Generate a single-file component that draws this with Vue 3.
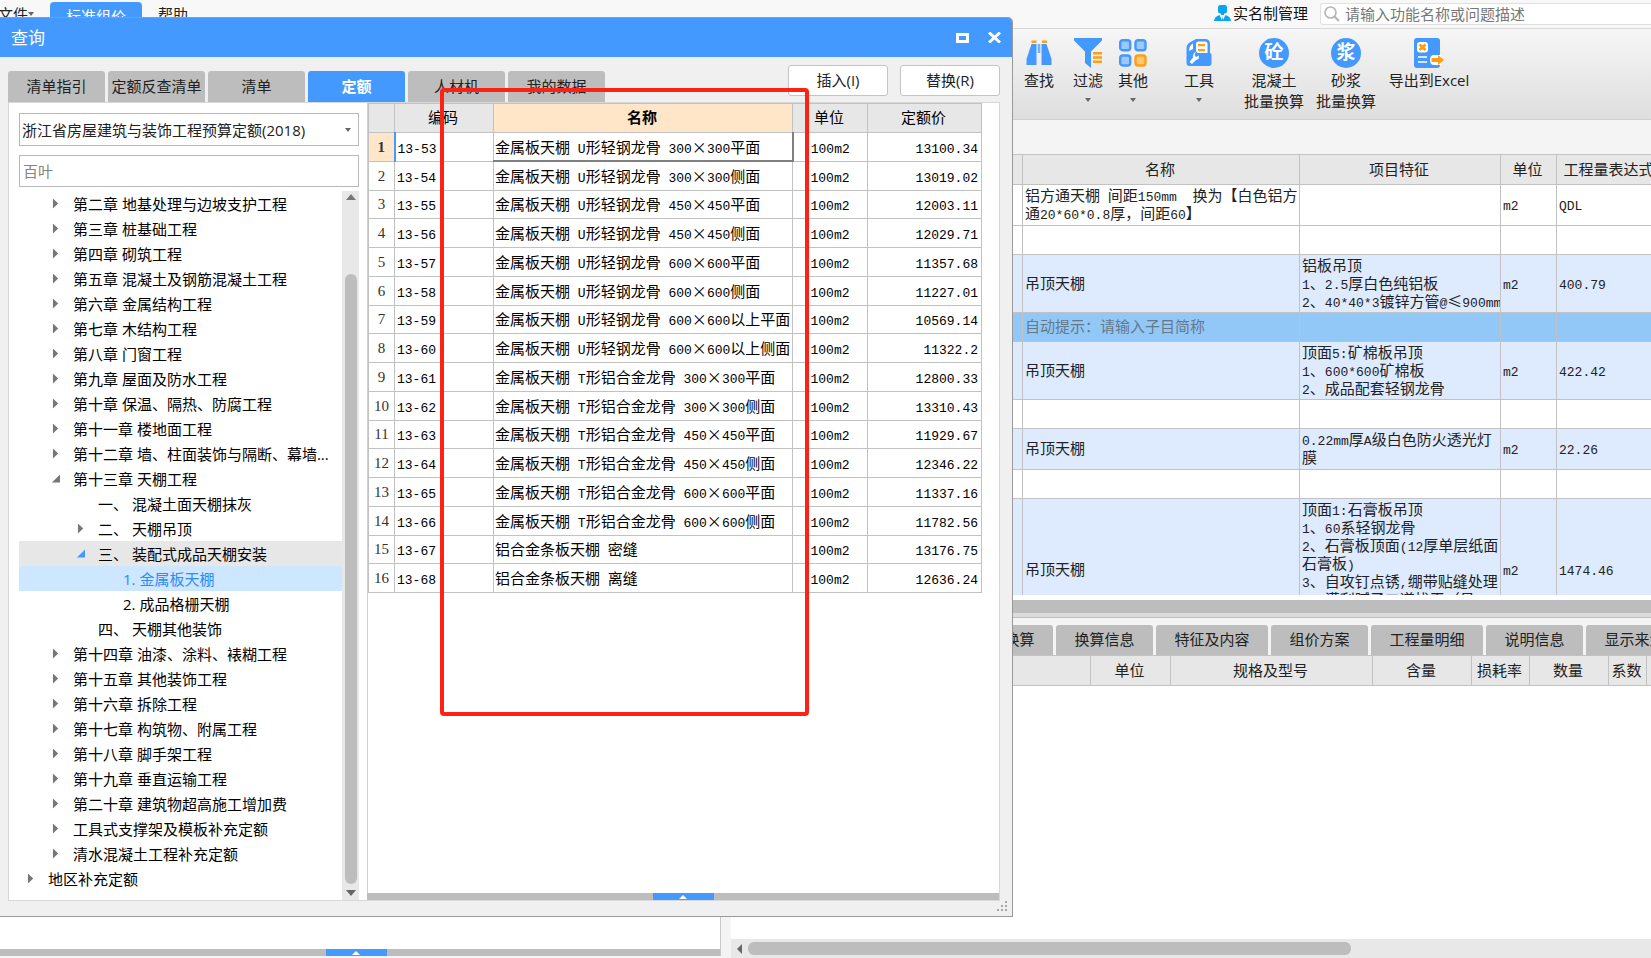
<script setup>
import { h, ref } from 'vue'

// Renders mixed text with half-width characters set in the monospace face.
const Mixed = (props) =>
  (props.text.match(/[\x20-\x7e]+|[^\x20-\x7e]+/g) || []).map((run) =>
    h('span', { class: /^[\x20-\x7e]/.test(run) ? 'run-half' : 'run-full' }, run)
  )
Mixed.props = ['text']

const tabs = ['清单指引', '定额反查清单', '清单', '定额', '人材机', '我的数据']
const activeTab = ref('定额')
const keyword = ref('百叶')

const tree = [
  ['第二章 地基处理与边坡支护工程', 1, 'closed'],
  ['第三章 桩基础工程', 1, 'closed'],
  ['第四章 砌筑工程', 1, 'closed'],
  ['第五章 混凝土及钢筋混凝土工程', 1, 'closed'],
  ['第六章 金属结构工程', 1, 'closed'],
  ['第七章 木结构工程', 1, 'closed'],
  ['第八章 门窗工程', 1, 'closed'],
  ['第九章 屋面及防水工程', 1, 'closed'],
  ['第十章 保温、隔热、防腐工程', 1, 'closed'],
  ['第十一章 楼地面工程', 1, 'closed'],
  ['第十二章 墙、柱面装饰与隔断、幕墙...', 1, 'closed'],
  ['第十三章 天棚工程', 1, 'open'],
  ['一、 混凝土面天棚抹灰', 2, 'leaf'],
  ['二、 天棚吊顶', 2, 'closed'],
  ['三、 装配式成品天棚安装', 2, 'open', 'parent'],
  ['1. 金属板天棚', 3, 'leaf', 'selected'],
  ['2. 成品格栅天棚', 3, 'leaf'],
  ['四、 天棚其他装饰', 2, 'leaf'],
  ['第十四章 油漆、涂料、裱糊工程', 1, 'closed'],
  ['第十五章 其他装饰工程', 1, 'closed'],
  ['第十六章 拆除工程', 1, 'closed'],
  ['第十七章 构筑物、附属工程', 1, 'closed'],
  ['第十八章 脚手架工程', 1, 'closed'],
  ['第十九章 垂直运输工程', 1, 'closed'],
  ['第二十章 建筑物超高施工增加费', 1, 'closed'],
  ['工具式支撑架及模板补充定额', 1, 'closed'],
  ['清水混凝土工程补充定额', 1, 'closed'],
  ['地区补充定额', 0, 'closed']
].map(([label, level, state, mark]) => ({ label, level, state, mark }))

const quotas = [
  ['金属板天棚 U形轻钢龙骨 300×300平面', '13100.34'],
  ['金属板天棚 U形轻钢龙骨 300×300侧面', '13019.02'],
  ['金属板天棚 U形轻钢龙骨 450×450平面', '12003.11'],
  ['金属板天棚 U形轻钢龙骨 450×450侧面', '12029.71'],
  ['金属板天棚 U形轻钢龙骨 600×600平面', '11357.68'],
  ['金属板天棚 U形轻钢龙骨 600×600侧面', '11227.01'],
  ['金属板天棚 U形轻钢龙骨 600×600以上平面', '10569.14'],
  ['金属板天棚 U形轻钢龙骨 600×600以上侧面', '11322.2'],
  ['金属板天棚 T形铝合金龙骨 300×300平面', '12800.33'],
  ['金属板天棚 T形铝合金龙骨 300×300侧面', '13310.43'],
  ['金属板天棚 T形铝合金龙骨 450×450平面', '11929.67'],
  ['金属板天棚 T形铝合金龙骨 450×450侧面', '12346.22'],
  ['金属板天棚 T形铝合金龙骨 600×600平面', '11337.16'],
  ['金属板天棚 T形铝合金龙骨 600×600侧面', '11782.56'],
  ['铝合金条板天棚 密缝', '13176.75'],
  ['铝合金条板天棚 离缝', '12636.24']
].map(([name, price], i) => ({ code: '13-' + (53 + i), name, price }))

const items = [
  { name: '铝方通天棚 间距150mm  换为【白色铝方\n通20*60*0.8厚，间距60】', feature: '', unit: 'm2', qty: 'QDL', kind: 'two' },
  { name: '', feature: '', unit: '', qty: '', kind: 'one' },
  { name: '吊顶天棚', feature: '铝板吊顶\n1、2.5厚白色纯铝板\n2、40*40*3镀锌方管@≤900mm', unit: 'm2', qty: '400.79', kind: 'three tint' },
  { name: '自动提示：请输入子目简称', feature: '', unit: '', qty: '', kind: 'one hint' },
  { name: '吊顶天棚', feature: '顶面5:矿棉板吊顶\n1、600*600矿棉板\n2、成品配套轻钢龙骨', unit: 'm2', qty: '422.42', kind: 'three tint' },
  { name: '', feature: '', unit: '', qty: '', kind: 'one' },
  { name: '吊顶天棚', feature: '0.22mm厚A级白色防火透光灯\n膜', unit: 'm2', qty: '22.26', kind: 'two tint' },
  { name: '', feature: '', unit: '', qty: '', kind: 'one' },
  { name: '吊顶天棚', feature: '顶面1:石膏板吊顶\n1、60系轻钢龙骨\n2、石膏板顶面(12厚单层纸面\n石膏板)\n3、自攻钉点锈,绷带贴缝处理\n4、满刮腻子二道找平（吊', unit: 'm2', qty: '1474.46', kind: 'tall tint' }
]

const detailTabs = [
  ['标准换算', false], ['换算信息', false], ['特征及内容', true], ['组价方案', false],
  ['工程量明细', true], ['说明信息', false], ['显示来源', false]
]
</script>

<template>
  <div class="app">
    <header class="menubar">
      <button class="menu file">文件<i class="caret"></i></button>
      <button class="menu current">标准组价</button>
      <button class="menu help">帮助</button>
      <div class="account">
        <svg width="17" height="16" viewBox="0 0 17 16" fill="#0aa5f0">
          <rect x="4" y="0" width="9" height="8.500" rx="2.500" />
          <path d="M7 8h3v2H7z" />
          <path d="M0 16q.5-4.500 5.500-6L8 15l.5-4 .5 4 2.500-5q5 1.500 5.500 6z" />
        </svg>
        <a href="#">实名制管理</a>
      </div>
      <label class="search">
        <svg width="16" height="16" viewBox="0 0 16 16" fill="none" stroke="#b5b5b5">
          <circle cx="6.500" cy="6.500" r="5.500" stroke-width="1.600" />
          <path d="M10.500 10.500L15 15" stroke-width="2.200" />
        </svg>
        <input type="text" aria-label="搜索" placeholder="请输入功能名称或问题描述" />
      </label>
    </header>

    <nav class="ribbon">
      <button class="tool find">
        <svg width="30" height="30" viewBox="0 0 30 30">
          <path d="M7.500 6h5v21H2.500V21z M17.500 6h5l5 15v6H17.500z" fill="#49f" />
          <path d="M13.500 6h3v9h-3z" fill="#9cc8ff" /><path d="M14.500 6h1v9h-1z" fill="#49f" />
          <path d="M7.500 2.500h5V5h-5z M18 2.500h5V5h-5z" fill="#ff9d14" />
        </svg>
        <span>查找</span>
      </button>
      <button class="tool filter">
        <svg width="30" height="30" viewBox="0 0 30 30">
          <path d="M1 0h28v2.500L18 13.500V30l-6-5V13.500L1 2.500z" fill="#49f" />
          <path d="M20 14h9v2.500h-9z M20 18.300h9v2.500h-9z M20 22.600h9v2.500h-9z" fill="#ff9d14" />
        </svg>
        <span>过滤</span><i class="caret"></i>
      </button>
      <button class="tool other">
        <svg width="30" height="30" viewBox="0 0 30 30" stroke-width="2.400" fill="#9cc8ff" stroke="#49f">
          <rect x="2.200" y="2.200" width="10" height="10" rx="2.500" />
          <rect x="17.500" y="2.200" width="10" height="10" rx="2.500" />
          <rect x="2.200" y="17.500" width="10" height="10" rx="2.500" />
          <rect x="17.500" y="17.500" width="10" height="10" rx="2.500" fill="#ffc878" stroke="#ff9d14" />
        </svg>
        <span>其他</span><i class="caret"></i>
      </button>
      <button class="tool kit">
        <svg width="30" height="30" viewBox="0 0 30 30">
          <path d="M2.500 14V10q0-4 4-6L12 1h9q5 0 5 5v9q1.500 0 1.500 2v8q0 3-3 3h-19q-3 0-3-3z" fill="#49f" />
          <path d="M12 6q0-2.500 2.500-2.500H21q2.500 0 2.500 2.500v9H15q-3 0-3-3z" fill="#fff" />
          <path d="M14 6h7v2.200h-7z M14 11h7v2.200h-7z" fill="#ff9d14" />
          <path d="M5 13q0-5.500 4-7.500V11z" fill="#fff" />
          <path d="M12 14l-1.500 3 1.500 2 3-1.500q.5 4-3 4.500L8 26l-2.500-2L9 19.500Q8.500 15 12 14z" fill="#fff" />
        </svg>
        <span>工具</span><i class="caret"></i>
      </button>
      <button class="tool batch concrete"><b class="disc">砼</b><span>混凝土<br />批量换算</span></button>
      <button class="tool batch"><b class="disc">浆</b><span>砂浆<br />批量换算</span></button>
      <button class="tool excel">
        <svg width="32" height="30" viewBox="0 0 32 30">
          <rect x="1" y="0" width="26" height="30" rx="3" fill="#49f" />
          <rect x="4" y="4" width="11" height="10.500" rx="3" fill="#fff" />
          <path d="M6.500 6.500l6 5.500m0-5.500l-6 5.500" stroke="#ff9d14" stroke-width="2.600" />
          <path d="M5 18h9v2H5z M5 23h9v2H5z" fill="#d5e8ff" />
          <path d="M28 17h-7q-4 0-4 5t4 5h7z" fill="#fff" />
          <path d="M18.500 20H25v-3l6 5-6 5v-3h-6.500z" fill="#ff9d14" />
        </svg>
        <span>导出到Excel</span>
      </button>
    </nav>

    <main class="workspace">
      <aside class="side">
        <div class="splitter"><button class="handle" aria-label="展开"><i></i></button></div>
      </aside>
      <section class="work">
        <div class="strip"></div>
        <div class="bill">
          <table class="grid">
            <colgroup><col class="b0" /><col class="b1" /><col class="b2" /><col class="b3" /><col class="b4" /></colgroup>
            <thead><tr><th></th><th>名称</th><th>项目特征</th><th>单位</th><th>工程量表达式</th></tr></thead>
            <tbody>
              <tr v-for="(r, i) in items" :key="i" :class="r.kind">
                <td></td>
                <td><Mixed :text="r.name" /></td>
                <td><Mixed :text="r.feature" /></td>
                <td><Mixed :text="r.unit" /></td>
                <td><Mixed :text="r.qty" /></td>
              </tr>
            </tbody>
          </table>
        </div>
        <div class="hbar"></div>
        <div class="detail-tabs">
          <button v-for="[t, wide] in detailTabs" :key="t" :class="{ wide }">{{ t }}</button>
        </div>
        <div class="detail">
          <table class="grid">
            <colgroup>
              <col class="d0" /><col class="d1" /><col class="d2" /><col class="d3" /><col class="d4" /><col class="d5" /><col class="d6" /><col />
            </colgroup>
            <thead>
              <tr><th></th><th>单位</th><th>规格及型号</th><th>含量</th><th>损耗率</th><th>数量</th><th>系数</th><th></th></tr>
            </thead>
          </table>
        </div>
        <div class="hscroll"><i class="left"></i><div class="thumb"></div></div>
      </section>
    </main>

    <section class="dialog" role="dialog" aria-label="查询">
      <div class="title">
        <h1>查询</h1>
        <button aria-label="最大化"><svg width="13" height="10" viewBox="0 0 13 10"><path d="M1.500 1.500h10v7h-10z" fill="none" stroke="#fff" stroke-width="3" /></svg></button>
        <button aria-label="关闭"><svg width="13" height="11" viewBox="0 0 13 11"><path d="M1 .5l11 10M12 .5l-11 10" stroke="#fff" stroke-width="3" /></svg></button>
      </div>
      <div class="bar">
        <div class="tabs">
          <button v-for="t in tabs" :key="t" :class="{ active: t === activeTab }" @click="activeTab = t">{{ t }}</button>
        </div>
        <div class="actions"><button>插入(I)</button><button>替换(R)</button></div>
      </div>
      <div class="panel">
        <div class="browse">
          <label class="library">
            <select aria-label="定额库"><option>浙江省房屋建筑与装饰工程预算定额(2018)</option></select>
            <i class="caret"></i>
          </label>
          <input v-model="keyword" class="keyword" type="text" aria-label="关键字" />
          <div class="treebox">
            <ul class="tree">
              <li v-for="n in tree" :key="n.label">
                <button :class="['level' + n.level, n.mark]">
                  <i :class="['toggle', n.state]"></i><span>{{ n.label }}</span>
                </button>
              </li>
            </ul>
            <div class="vscroll"><i class="up"></i><div class="thumb"></div><i class="down"></i></div>
          </div>
        </div>
        <div class="result">
          <div class="sheet">
            <table class="grid quota">
              <colgroup><col class="q0" /><col class="q1" /><col class="q2" /><col class="q3" /><col class="q4" /></colgroup>
              <thead><tr><th></th><th>编码</th><th class="focus">名称</th><th>单位</th><th>定额价</th></tr></thead>
              <tbody>
                <tr v-for="(q, i) in quotas" :key="q.code" :class="{ first: i === 0 }">
                  <th scope="row">{{ i + 1 }}</th>
                  <td><Mixed :text="q.code" /></td>
                  <td class="name"><Mixed :text="q.name" /></td>
                  <td class="unit"><Mixed text="100m2" /></td>
                  <td class="price"><Mixed :text="q.price" /></td>
                </tr>
              </tbody>
            </table>
          </div>
          <div class="splitter"><button class="handle" aria-label="展开"><i></i></button></div>
        </div>
      </div>
      <div class="foot">
        <svg width="12" height="12" viewBox="0 0 12 12" fill="#a8a8a8">
          <path d="M8 0h2v2H8z M4 4h2v2H4z M8 4h2v2H8z M0 8h2v2H0z M4 8h2v2H4z M8 8h2v2H8z" />
        </svg>
      </div>
    </section>
    <div class="marker"></div>
  </div>
</template>

<style>
html, body { overflow: hidden; }
.run-half { font-family: "Liberation Mono", monospace; font-size: 13px; line-height: 12px; }
.run-full { font-family: "Noto Sans CJK SC", sans-serif; }
</style>

<style scoped>
* { box-sizing: border-box; }
.app {
  position: relative; display: flex; flex-direction: column; height: 100vh; overflow: hidden;
  background: #f4f4f4; color: #222; font: 15px/20px "Open Sans", "Noto Sans CJK SC", sans-serif;
}
button { margin: 0; padding: 0; border: 0; background: none; color: inherit; font: inherit; white-space: nowrap; }
i { display: block; flex: none; }
svg { display: block; flex: none; }
.caret { width: 0; height: 0; border: 3px solid transparent; border-top: 4px solid #666; border-bottom: 0; }

.menubar { display: flex; flex: 0 0 28px; align-items: flex-start; background: #f8f8f8; border-bottom: 1px solid #d8d8d8; }
.menu { padding-top: 4px; }
.file { display: flex; align-items: center; width: 50px; margin-left: -2px; }
.current { width: 92px; height: 26px; margin: 2px 0 0 2px; padding-top: 2px; border-radius: 4px 4px 0 0; background: #49f; color: #fff; }
.help { margin-left: 16px; }
.account { display: flex; align-items: center; margin-left: auto; gap: 2px; height: 26px; }
.account a { color: #111; text-decoration: none; }
.search { display: flex; align-items: center; width: 331px; height: 22px; margin: 3px 0 0 12px; padding-left: 3px; gap: 5px; border: 1px solid #e0e0e0; border-right: 0; border-radius: 3px 0 0 3px; background: #fff; }
.search input { flex: 1; min-width: 0; height: 20px; padding: 0 0 1px; border: 0; outline: 0; background: none; font: inherit; }
.search input::placeholder { color: #777; opacity: 1; }

.ribbon { display: flex; flex: 0 0 91px; align-items: flex-start; padding: 9px 0 0 1014px; background: linear-gradient(#f6f6f6, #dedede); border-bottom: 1px solid #d0d0d0; }
.tool { display: flex; flex: none; flex-direction: column; align-items: center; gap: 2px; line-height: 21px; }
.tool .caret { margin-top: 5px; }
.find { width: 50px; }
.filter { width: 48px; }
.other { width: 42px; }
.kit { width: 48px; margin-left: 21px; }
.batch { width: 72px; }
.concrete { margin-left: 15px; }
.excel { width: 90px; margin-left: 2px; }
.disc { width: 30px; height: 30px; border-radius: 50%; background: #49f; color: #fff; font-size: 19px; line-height: 29px; }

.workspace { display: flex; flex: 1; min-height: 0; }
.side { display: flex; flex: 0 0 721px; flex-direction: column; justify-content: flex-end; margin-bottom: 2px; border-right: 1px solid #c8c8c8; background: #fff; }
.splitter { display: flex; flex: 0 0 7px; justify-content: center; background: #bdbdbd; }
.side .splitter { padding-right: 8px; }
.handle { display: flex; align-items: center; justify-content: center; width: 61px; height: 7px; background: #49f; }
.handle i { width: 0; height: 0; border: 4px solid transparent; border-top: 0; border-bottom: 4px solid #fff; }
.work { display: flex; flex: 1; flex-direction: column; min-width: 0; margin-left: 10px; }
.strip { flex: 0 0 34px; }
.bill { flex: 0 0 441px; overflow: hidden; background: #fff; }
.grid { border-collapse: collapse; table-layout: fixed; font-family: "Noto Sans CJK SC", sans-serif; line-height: 18px; background: #fff; }
.grid th, .grid td { padding: 0 2px; border: 1px solid #c2c2c2; white-space: pre; overflow: hidden; text-align: left; }
.grid thead th { height: 30px; padding: 0 2px 2px 0; background: #e7e7e7; font-weight: 400; text-align: center; }
.bill .grid { width: 931px; }
.b0 { width: 291px; } .b1 { width: 277px; } .b2 { width: 201px; } .b3 { width: 56px; } .b4 { width: 106px; }
.bill td { padding-bottom: 2px; }
.one { height: 29px; } .two { height: 41px; } .three { height: 58px; } .tall { height: 143px; }
.tint { background: #deeafe; }
.hint { background: #92c8f7; color: #65788a; }
.bill .tall td:nth-child(3) { padding-top: 1px; vertical-align: top; }
.hbar { flex: 0 0 22px; border: solid; border-width: 5px 0 4px; border-color: #fff transparent #dcdcdc; background: #bdbdbd; }
.detail-tabs { display: flex; flex: 0 0 38px; gap: 3px; padding: 7px 0 0 225px; border-top: 1px solid #c0c0c0; overflow: hidden; }
.detail-tabs button { flex: 0 0 97px; padding-bottom: 2px; border-radius: 3px 3px 0 0; background: #bdbdbd; }
.detail-tabs button.wide { flex-basis: 112px; }
.detail { flex: 1; overflow: hidden; background: #fff; }
.detail .grid { width: 960px; }
.d0 { width: 359px; } .d1 { width: 80px; } .d2 { width: 202px; } .d3 { width: 99px; } .d4 { width: 58px; } .d5 { width: 79px; } .d6 { width: 38px; }
.hscroll { display: flex; flex: 0 0 19px; align-items: center; gap: 6px; padding-left: 6px; background: #e8e8e8; }
.hscroll .left { width: 0; height: 0; border: 5px solid transparent; border-left: 0; border-right: 5px solid #666; }
.hscroll .thumb { width: 66%; height: 13px; border-radius: 6px; background: #bdbdbd; }

.dialog {
  position: absolute; top: 17px; left: 0; display: flex; flex-direction: column; width: 1013px; height: 900px;
  border: 1px solid #999; border-left: 0; border-radius: 0 5px 0 0; overflow: hidden; background: #f0f0f0;
}
.title { display: flex; flex: 0 0 39px; align-items: center; gap: 19px; padding: 0 11px 0 11px; background: #49f; color: #fff; }
.title h1 { flex: 1; margin: 0; font-size: 17px; line-height: 24px; font-weight: 400; }
.bar { display: flex; flex: 0 0 45px; align-items: flex-end; justify-content: space-between; padding: 0 12px 0 8px; }
.tabs { display: flex; gap: 3px; }
.tabs button { width: 97px; height: 31px; padding-bottom: 2px; border-radius: 3px 3px 0 0; background: #bdbdbd; }
.tabs .active { background: #49f; color: #fff; font-weight: 700; }
.actions { display: flex; gap: 12px; padding-bottom: 6px; }
.actions button { width: 100px; height: 31px; padding-bottom: 1px; border: 1px solid #c4c4c4; border-radius: 3px; background: #fff; }
.panel { display: flex; flex: 1; min-height: 0; margin: 0 12px 0 8px; border: 1px solid #d8d8d8; background: #fff; }
.browse { display: flex; flex: 0 0 358px; flex-direction: column; padding: 10px 8px 0 10px; }
.library { display: flex; align-items: center; height: 33px; padding-right: 7px; border: 1px solid #b8b8b8; }
.library select { flex: 1; height: 31px; padding: 0 0 0 2px; border: 0; outline: 0; appearance: none; background: #fff; color: #222; font: inherit; }
.keyword { height: 32px; margin-top: 9px; padding: 0 3px 2px; border: 1px solid #b8b8b8; outline: 0; background: #fff; color: #858585; font: inherit; }
.treebox { display: flex; flex: 1; min-height: 0; margin-top: 4px; }
.tree { flex: 1; margin: 0; padding: 0; list-style: none; color: #000; }
.tree button { display: flex; align-items: center; width: 100%; height: 25px; gap: 10px; text-align: left; }
.tree .level0 { padding-left: 7px; }
.tree .level1 { padding-left: 32px; }
.tree .level2 { padding-left: 57px; }
.tree .level3 { padding-left: 82px; }
.tree .parent { background: #e7e7e7; }
.tree .selected { background: #cce7ff; color: #2e8bf5; }
.toggle { width: 12px; height: 10px; }
.toggle.closed { background: #777; clip-path: polygon(16% 0, 60% 50%, 16% 100%); }
.toggle.open { background: #777; clip-path: polygon(8% 90%, 75% 10%, 75% 90%); }
.parent .toggle.open { background: #49f; }
.vscroll { display: flex; flex: 0 0 17px; flex-direction: column; align-items: center; padding: 3px 0 4px; background: #e8e8e8; }
.vscroll .up, .vscroll .down { width: 0; height: 0; border: 5px solid transparent; }
.vscroll .up { border-top: 0; border-bottom: 6px solid #777; }
.vscroll .down { border-bottom: 0; border-top: 6px solid #666; }
.vscroll .thumb { flex: 1; width: 12px; margin: 74px 0 6px; border-radius: 6px; background: #bdbdbd; }
.result { display: flex; flex: 1; flex-direction: column; min-width: 0; }
.sheet { flex: 1; min-height: 0; border-left: 1px solid #d0d0d0; }
.quota { width: 613px; height: 490px; color: #000; }
.quota thead th { height: 29px; }
.quota tbody tr { height: 28px; }
.q0 { width: 26px; } .q1 { width: 99px; } .q2 { width: 299px; } .q3 { width: 75px; } .q4 { width: 114px; }
.quota thead .focus { background: #ffe6c8; font-weight: 700; }
.quota tbody th { padding: 0; font-family: "Liberation Serif", serif; font-weight: 400; text-align: center; color: #333; }
.quota .first th { background: #ffe6c8; font-weight: 700; border-right: 2px solid #49f; }
.quota td.name { padding: 0 1px; }
.quota .first .name { border-top-color: #49f; border-right: 2px solid #808080; border-bottom: 2px solid #808080; border-left-color: #808080; }
.quota .unit { text-align: center; }
.quota .price { padding-right: 3px; text-align: right; }
.foot { display: flex; flex: 0 0 15px; align-items: flex-start; justify-content: flex-end; padding-right: 3px; }
.marker { position: absolute; top: 88px; left: 440px; width: 369px; height: 628px; border: 4px solid #ff2113; border-radius: 4px; pointer-events: none; }
</style>
